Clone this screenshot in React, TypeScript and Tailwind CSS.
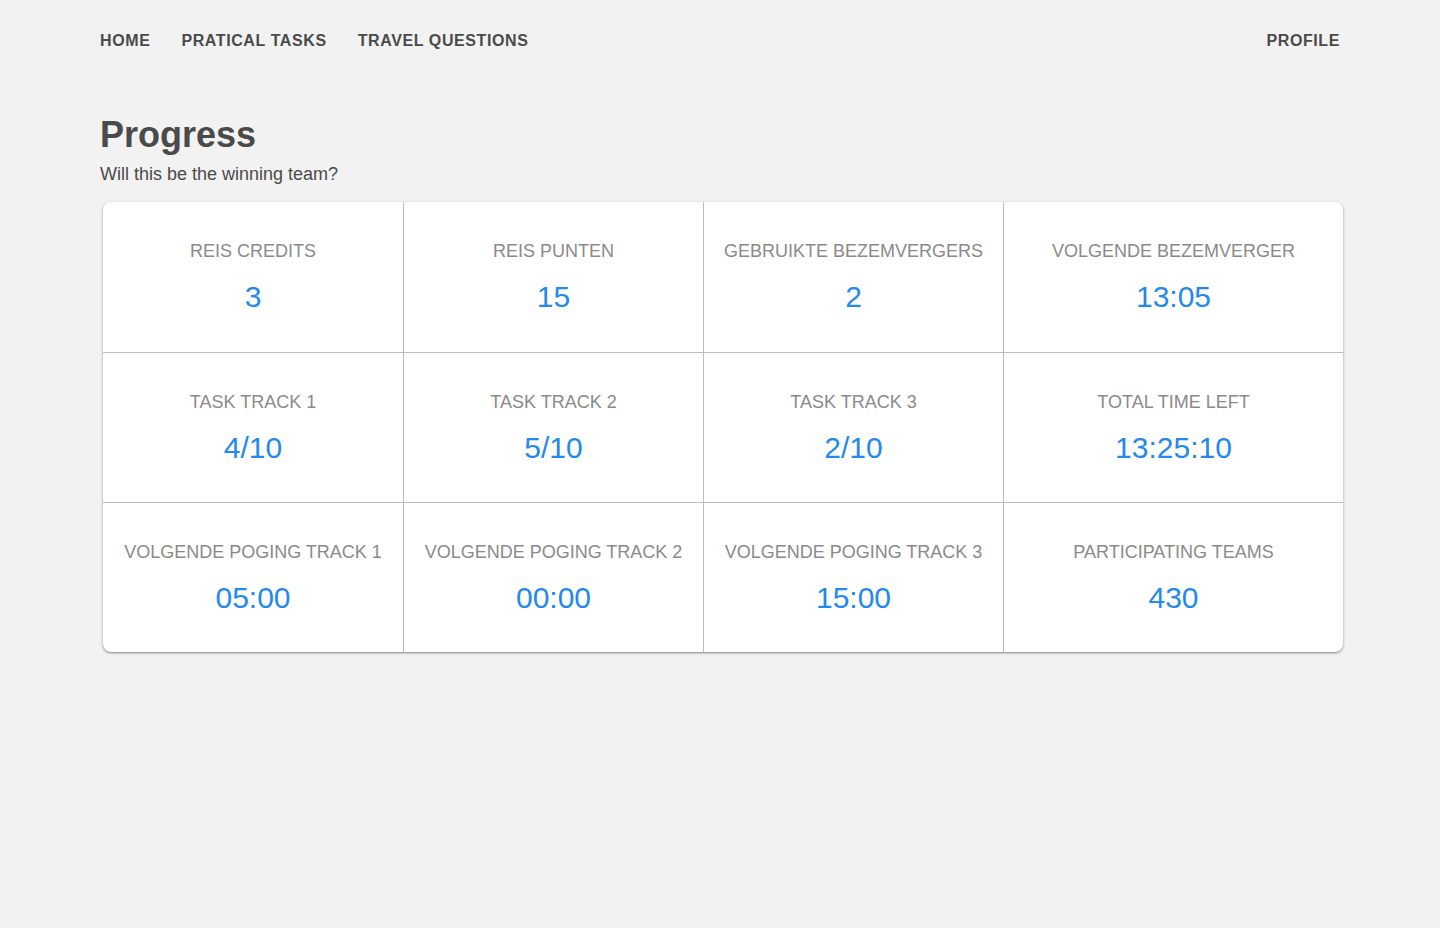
const NAV_LINKS = ["Home", "Pratical tasks", "Travel questions"];

const STATS = [
  { label: "Reis credits", value: "3" },
  { label: "Reis punten", value: "15" },
  { label: "Gebruikte bezemvergers", value: "2" },
  { label: "Volgende bezemverger", value: "13:05" },
  { label: "Task track 1", value: "4/10" },
  { label: "Task track 2", value: "5/10" },
  { label: "Task track 3", value: "2/10" },
  { label: "Total time left", value: "13:25:10" },
  { label: "Volgende poging track 1", value: "05:00" },
  { label: "Volgende poging track 2", value: "00:00" },
  { label: "Volgende poging track 3", value: "15:00" },
  { label: "Participating teams", value: "430" },
];

function StatCell({ label, value, index }: { label: string; value: string; index: number }) {
  const col = index % 4;
  const row = Math.floor(index / 4);
  return (
    <div
      className={[
        "flex h-[150px] flex-col items-center justify-center gap-[16px] border-[#bdbdbd]",
        col > 0 ? "border-l" : "",
        row > 0 ? "border-t" : "",
      ].join(" ")}
    >
      <span className="text-[18px] leading-[24px] uppercase text-[#8a8a8a]">{label}</span>
      <span className="text-[30px] leading-[36px] text-[#2389f0]">{value}</span>
    </div>
  );
}

export default function App() {
  return (
    <div
      className="min-h-[928px] bg-[#f2f2f2] text-[#4a4a4a]"
      style={{ fontFamily: '"Liberation Sans", Arial, sans-serif' }}
    >
      <nav className="flex h-[81px] items-center justify-between px-[100px] pt-[1px]">
        <div className="flex items-center gap-[31px]">
          {NAV_LINKS.map((link) => (
            <a
              key={link}
              href="#"
              className="text-[16px] font-bold uppercase tracking-[0.6px] text-[#4a4a4a]"
            >
              {link}
            </a>
          ))}
        </div>
        <a href="#" className="text-[16px] font-bold uppercase tracking-[0.6px] text-[#4a4a4a]">
          Profile
        </a>
      </nav>

      <main className="px-[100px] pt-[32px]">
        <h1 className="text-[36px] font-bold leading-[43px]">Progress</h1>
        <p className="mt-[6px] text-[18px] leading-[24px]">Will this be the winning team?</p>

        <div className="mt-[16px] ml-[3px] grid w-[1240px] grid-cols-[300px_300px_300px_1fr] overflow-hidden rounded-[8px] bg-white shadow-[0_1px_3px_rgba(0,0,0,0.35),0_1px_1px_rgba(0,0,0,0.14)]">
          {STATS.map((stat, i) => (
            <StatCell key={stat.label} label={stat.label} value={stat.value} index={i} />
          ))}
        </div>
      </main>
    </div>
  );
}
